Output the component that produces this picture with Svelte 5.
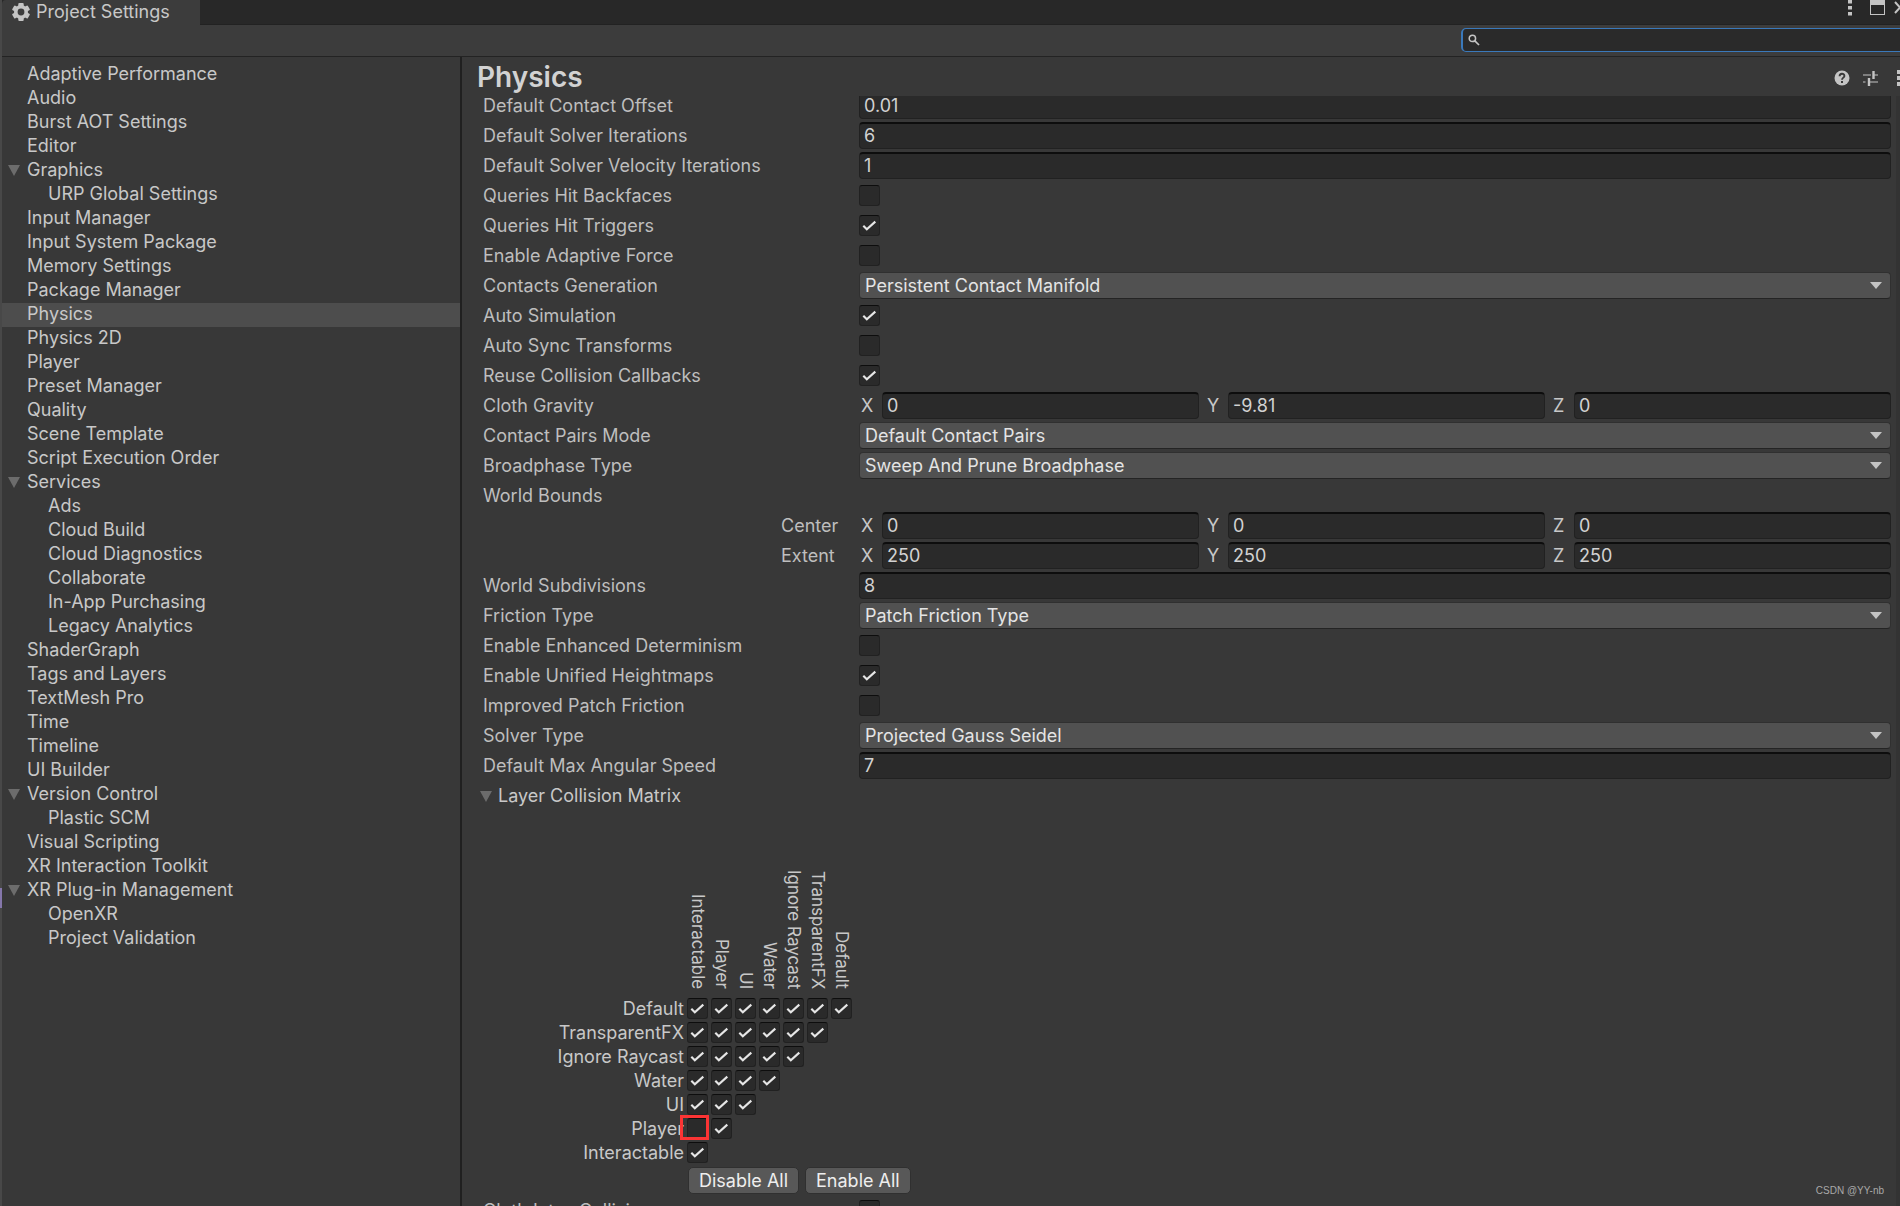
<script lang="ts">
  type NavItem = { name: string; level?: number; open?: boolean };
  type Row = {
    label: string;
    kind: 'text' | 'check' | 'select' | 'vector' | 'heading';
    value?: string;
    on?: boolean;
    values?: string[];
    nested?: boolean;
  };

  const nav: NavItem[] = [
    { name: 'Adaptive Performance' },
    { name: 'Audio' },
    { name: 'Burst AOT Settings' },
    { name: 'Editor' },
    { name: 'Graphics', open: true },
    { name: 'URP Global Settings', level: 1 },
    { name: 'Input Manager' },
    { name: 'Input System Package' },
    { name: 'Memory Settings' },
    { name: 'Package Manager' },
    { name: 'Physics' },
    { name: 'Physics 2D' },
    { name: 'Player' },
    { name: 'Preset Manager' },
    { name: 'Quality' },
    { name: 'Scene Template' },
    { name: 'Script Execution Order' },
    { name: 'Services', open: true },
    { name: 'Ads', level: 1 },
    { name: 'Cloud Build', level: 1 },
    { name: 'Cloud Diagnostics', level: 1 },
    { name: 'Collaborate', level: 1 },
    { name: 'In-App Purchasing', level: 1 },
    { name: 'Legacy Analytics', level: 1 },
    { name: 'ShaderGraph' },
    { name: 'Tags and Layers' },
    { name: 'TextMesh Pro' },
    { name: 'Time' },
    { name: 'Timeline' },
    { name: 'UI Builder' },
    { name: 'Version Control', open: true },
    { name: 'Plastic SCM', level: 1 },
    { name: 'Visual Scripting' },
    { name: 'XR Interaction Toolkit' },
    { name: 'XR Plug-in Management', open: true },
    { name: 'OpenXR', level: 1 },
    { name: 'Project Validation', level: 1 }
  ];

  let current = $state('Physics');

  let rows: Row[] = $state([
    { label: 'Default Contact Offset', kind: 'text', value: '0.01' },
    { label: 'Default Solver Iterations', kind: 'text', value: '6' },
    { label: 'Default Solver Velocity Iterations', kind: 'text', value: '1' },
    { label: 'Queries Hit Backfaces', kind: 'check', on: false },
    { label: 'Queries Hit Triggers', kind: 'check', on: true },
    { label: 'Enable Adaptive Force', kind: 'check', on: false },
    { label: 'Contacts Generation', kind: 'select', value: 'Persistent Contact Manifold' },
    { label: 'Auto Simulation', kind: 'check', on: true },
    { label: 'Auto Sync Transforms', kind: 'check', on: false },
    { label: 'Reuse Collision Callbacks', kind: 'check', on: true },
    { label: 'Cloth Gravity', kind: 'vector', values: ['0', '-9.81', '0'] },
    { label: 'Contact Pairs Mode', kind: 'select', value: 'Default Contact Pairs' },
    { label: 'Broadphase Type', kind: 'select', value: 'Sweep And Prune Broadphase' },
    { label: 'World Bounds', kind: 'heading' },
    { label: 'Center', kind: 'vector', values: ['0', '0', '0'], nested: true },
    { label: 'Extent', kind: 'vector', values: ['250', '250', '250'], nested: true },
    { label: 'World Subdivisions', kind: 'text', value: '8' },
    { label: 'Friction Type', kind: 'select', value: 'Patch Friction Type' },
    { label: 'Enable Enhanced Determinism', kind: 'check', on: false },
    { label: 'Enable Unified Heightmaps', kind: 'check', on: true },
    { label: 'Improved Patch Friction', kind: 'check', on: false },
    { label: 'Solver Type', kind: 'select', value: 'Projected Gauss Seidel' },
    { label: 'Default Max Angular Speed', kind: 'text', value: '7' }
  ]);

  const layers = ['Default', 'TransparentFX', 'Ignore Raycast', 'Water', 'UI', 'Player', 'Interactable'];
  const columns = [...layers].reverse();

  let matrix: boolean[][] = $state(
    layers.map((row, r) =>
      columns.slice(0, layers.length - r).map((col) => !(row === 'Player' && col === 'Interactable'))
    )
  );

  let cloth = $state(false);

  function setAll(value: boolean) {
    matrix = matrix.map((row) => row.map(() => value));
  }
</script>

{#snippet tick()}
  <svg class="tick" viewBox="0 0 21 21" aria-hidden="true">
    <path d="M4.3 10.8 L7.8 14.3 L16.3 6.6" />
  </svg>
{/snippet}

<div class="window">
  <header class="tabs">
    <div class="tab">
      <svg class="gear" viewBox="0 0 18 18" aria-hidden="true">
        <g fill="#c4c4c4">
          <rect x="6.3" y="0" width="5.4" height="18" rx="1" />
          <rect x="6.3" y="0" width="5.4" height="18" rx="1" transform="rotate(60 9 9)" />
          <rect x="6.3" y="0" width="5.4" height="18" rx="1" transform="rotate(120 9 9)" />
          <circle cx="9" cy="9" r="7" />
        </g>
        <circle cx="9" cy="9" r="3.4" fill="#3c3c3c" />
      </svg>
      <span>Project Settings</span>
    </div>
    <div class="window-tools">
      <button aria-label="Window menu">
        <svg width="4" height="16" viewBox="0 0 4 16"><path d="M0 0h4v3.5H0zM0 6h4v3.5H0zM0 12h4v3.5H0z" fill="#c4c4c4" /></svg>
      </button>
      <button aria-label="Maximize">
        <svg width="15" height="15" viewBox="0 0 15 15"><path d="M0 0h15v15H0zM1 5v9h13V5z" fill="#c4c4c4" fill-rule="evenodd" /></svg>
      </button>
      <button aria-label="Close">
        <svg width="12" height="14" viewBox="0 0 12 14"><path d="M1 2 L11 13 M11 2 L1 13" stroke="#c4c4c4" stroke-width="2" /></svg>
      </button>
    </div>
  </header>

  <div class="toolbar">
    <label class="search">
      <svg width="12" height="12" viewBox="0 0 12 12" aria-hidden="true">
        <circle cx="4.4" cy="4.4" r="3.2" fill="none" stroke="#c4c4c4" stroke-width="1.5" />
        <path d="M6.6 6.6 L11 11" stroke="#c4c4c4" stroke-width="1.7" />
      </svg>
      <input type="text" aria-label="Search settings" />
    </label>
  </div>

  <div class="body">
    <nav aria-label="Settings categories">
      {#each nav as item}
        <button
          class="item"
          class:child={item.level === 1}
          class:selected={item.name === current}
          onclick={() => (current = item.name)}
        >
          {#if item.open}
            <svg class="fold" viewBox="0 0 12 12" aria-hidden="true"><path d="M0 1h12L6 12z" /></svg>
          {/if}
          <span>{item.name}</span>
        </button>
      {/each}
    </nav>

    <main>
      <div class="title">
        <h1>Physics</h1>
        <div class="title-tools">
          <button aria-label="Help">
            <svg width="16" height="16" viewBox="0 0 16 16">
              <circle cx="8" cy="8" r="7.5" fill="#c4c4c4" />
              <path d="M5.6 6.2 C5.6 3 10.4 3 10.4 5.9 C10.4 7.6 8 7.7 8 9.8" fill="none" stroke="#383838" stroke-width="1.9" />
              <rect x="7" y="11" width="2" height="2" fill="#383838" />
            </svg>
          </button>
          <button aria-label="Presets">
            <svg width="15" height="15" viewBox="0 0 15 15">
              <path d="M0 4h8M11 4h4M0 11h2.5M6 11h9" stroke="#c4c4c4" stroke-width="1.2" />
              <path d="M10.5 0v8M6 7v8" stroke="#c4c4c4" stroke-width="2.4" />
            </svg>
          </button>
          <button aria-label="Component menu">
            <svg width="4" height="16" viewBox="0 0 4 16"><path d="M0 0h4v4H0zM0 6h4v4H0zM0 12h4v4H0z" fill="#c4c4c4" /></svg>
          </button>
        </div>
      </div>

      <div class="viewport">
        <div class="form">
          {#each rows as row, i}
            <div class="row">
              {#if row.kind === 'vector' || row.kind === 'heading'}
                <span class="name" class:nested={row.nested}>{row.label}</span>
              {:else}
                <label class="name" for={`field-${i}`}>{row.label}</label>
              {/if}

              {#if row.kind === 'text'}
                <input class="field" type="text" id={`field-${i}`} bind:value={row.value} />
              {:else if row.kind === 'check'}
                <span class="check">
                  <input type="checkbox" id={`field-${i}`} bind:checked={row.on} />
                  {@render tick()}
                </span>
              {:else if row.kind === 'select'}
                <span class="drop">
                  <select id={`field-${i}`}>
                    <option>{row.value}</option>
                  </select>
                  <svg class="arrow" viewBox="0 0 12 7" aria-hidden="true"><path d="M0 0h12L6 7z" /></svg>
                </span>
              {:else if row.kind === 'vector' && row.values}
                <div class="vector" role="group" aria-label={row.label}>
                  {#each ['X', 'Y', 'Z'] as axis, a}
                    <label>
                      <span>{axis}</span>
                      <input class="field" type="text" bind:value={row.values[a]} />
                    </label>
                  {/each}
                </div>
              {/if}
            </div>
          {/each}

          <button class="foldout">
            <svg class="fold" viewBox="0 0 12 12" aria-hidden="true"><path d="M0 1h12L6 12z" /></svg>
            <span>Layer Collision Matrix</span>
          </button>

          <table>
            <thead>
              <tr>
                <td></td>
                {#each columns as col}
                  <th scope="col"><span>{col}</span></th>
                {/each}
              </tr>
            </thead>
            <tbody>
              {#each layers as layer, r}
                <tr>
                  <th scope="row">{layer}</th>
                  {#each matrix[r] as _, c}
                    <td>
                      <span class="check">
                        <input
                          type="checkbox"
                          aria-label={`${layer} collides with ${columns[c]}`}
                          bind:checked={matrix[r][c]}
                        />
                        {@render tick()}
                        {#if layer === 'Player' && c === 0}
                          <span class="marker"></span>
                        {/if}
                      </span>
                    </td>
                  {/each}
                </tr>
              {/each}
            </tbody>
          </table>

          <div class="actions">
            <button onclick={() => setAll(false)}>Disable All</button>
            <button onclick={() => setAll(true)}>Enable All</button>
          </div>

          <div class="row">
            <label class="name" for="cloth">Cloth Inter-Collision</label>
            <span class="check">
              <input type="checkbox" id="cloth" bind:checked={cloth} />
              {@render tick()}
            </span>
          </div>
        </div>
        <div class="scrollbar"></div>
      </div>
    </main>
  </div>

  <div class="edge-mark"></div>
  <div class="credit">CSDN @YY-nb</div>
</div>

<style>
  :global(body) {
    background: #383838;
  }

  .window,
  .window * {
    box-sizing: border-box;
  }

  .window {
    position: relative;
    display: flex;
    flex-direction: column;
    height: 100vh;
    overflow: hidden;
    padding-left: 2px;
    background: linear-gradient(to right, #484848 2px, #383838 2px);
    color: #c8c8c8;
    font-family: Inter, 'Liberation Sans', sans-serif;
    font-size: 18px;
    line-height: 24px;
  }

  button,
  input,
  select {
    margin: 0;
    padding: 0;
    border: 0;
    outline: 0;
    background: none;
    color: inherit;
    font: inherit;
  }

  svg {
    display: block;
    flex: none;
  }

  .tabs {
    display: flex;
    justify-content: space-between;
    flex: none;
    height: 25px;
    background: #282828;
  }

  .tab {
    display: flex;
    align-items: center;
    gap: 6px;
    width: 198px;
    padding: 0 10px 2px;
    border-top-left-radius: 4px;
    background: #3c3c3c;
    white-space: nowrap;
  }

  .gear {
    width: 18px;
    height: 18px;
  }

  .window-tools {
    display: flex;
    align-items: flex-start;
    flex: 1;
    justify-content: flex-end;
    gap: 9px;
    margin-right: -6px;
    border-bottom: 1px solid #222;
  }

  .window-tools button:first-child {
    margin-right: 9px;
  }

  .toolbar {
    display: flex;
    justify-content: flex-end;
    align-items: flex-start;
    flex: none;
    height: 32px;
    padding-top: 3px;
    border-bottom: 1px solid #232323;
    background: #3c3c3c;
  }

  .search {
    display: flex;
    align-items: center;
    gap: 6px;
    width: 450px;
    height: 24px;
    margin-right: -11px;
    padding-left: 5px;
    border: 1px solid #3a79bb;
    border-left-width: 2px;
    border-radius: 5px;
    background: #2a2a2a;
  }

  .search input {
    flex: 1;
    min-width: 0;
  }

  .body {
    display: flex;
    flex: 1;
    min-height: 0;
  }

  nav {
    flex: none;
    width: 460px;
    padding-top: 6px;
    border-right: 2px solid #202020;
    overflow: hidden;
  }

  .item {
    display: flex;
    align-items: center;
    gap: 7px;
    width: 100%;
    height: 24px;
    padding: 0 0 2px 25px;
    text-align: left;
    white-space: nowrap;
  }

  .item.child {
    padding-left: 46px;
  }

  .item.selected {
    background: #4d4d4d;
  }

  .item:has(.fold) {
    padding-left: 6px;
  }

  .fold {
    width: 12px;
    height: 12px;
    fill: #6c6c6c;
  }

  main {
    display: flex;
    flex-direction: column;
    flex: 1;
    min-width: 0;
  }

  .title {
    display: flex;
    justify-content: space-between;
    align-items: center;
    flex: none;
    height: 39px;
    padding: 1px 0 0 15px;
  }

  h1 {
    margin: 0;
    color: #d2d2d2;
    font-size: 28px;
    font-weight: 600;
    line-height: 34px;
  }

  .title-tools {
    display: flex;
    align-items: center;
    gap: 13px;
    margin-right: -1px;
    padding-top: 2px;
  }

  .title-tools button:last-child {
    margin-left: 6px;
  }

  .viewport {
    display: flex;
    flex: 1;
    min-height: 0;
    overflow: hidden;
  }

  .form {
    display: flex;
    flex-direction: column;
    flex: 1;
    gap: 3px;
    min-width: 0;
    height: max-content;
    margin-top: -4px;
    padding: 0 5px 0 18px;
  }

  .scrollbar {
    flex: none;
    width: 4px;
    background: #333;
  }

  .row {
    display: grid;
    grid-template-columns: 376px minmax(0, 1fr);
    align-items: center;
    height: 27px;
    padding-left: 3px;
  }

  .name {
    color: #bebebe;
    line-height: 27px;
    white-space: nowrap;
  }

  .name.nested {
    padding-left: 298px;
  }

  .field {
    width: 100%;
    min-width: 0;
    height: 27px;
    padding: 0 4px 1px;
    border: 1px solid #212121;
    border-top: 2px solid #0d0d0d;
    border-radius: 4px;
    background: #2a2a2a;
    color: #d2d2d2;
  }

  .vector {
    display: grid;
    grid-template-columns: repeat(3, minmax(0, 1fr));
    gap: 6px;
  }

  .vector label {
    display: grid;
    grid-template-columns: 21px minmax(0, 1fr);
    align-items: center;
    padding-left: 2px;
  }

  .drop,
  .check {
    position: relative;
    display: grid;
    align-items: center;
  }

  .drop > *,
  .check > input,
  .check > svg {
    grid-area: 1 / 1;
  }

  .drop select {
    appearance: none;
    width: 100%;
    height: 27px;
    padding: 0 24px 0 5px;
    border: 1px solid #303030;
    border-bottom-color: #242424;
    border-radius: 4px;
    background: #515151;
    color: #e4e4e4;
  }

  .arrow {
    justify-self: end;
    width: 12px;
    height: 7px;
    margin-right: 9px;
    fill: #c4c4c4;
    pointer-events: none;
  }

  .check {
    width: 21px;
    height: 21px;
  }

  .check input {
    appearance: none;
    width: 21px;
    height: 21px;
    border: 1px solid #212121;
    border-top-color: #0d0d0d;
    border-radius: 3px;
    background: #2a2a2a;
  }

  .tick {
    width: 21px;
    height: 21px;
    fill: none;
    stroke: #e6e6e6;
    stroke-width: 2.1;
    pointer-events: none;
    visibility: hidden;
  }

  .check input:checked + .tick {
    visibility: visible;
  }

  .marker {
    position: absolute;
    top: -3px;
    left: -7px;
    width: 29px;
    height: 25px;
    border: 3px solid #fb3434;
    pointer-events: none;
  }

  .foldout {
    display: flex;
    align-items: center;
    gap: 6px;
    height: 27px;
    text-align: left;
  }

  table {
    align-self: flex-start;
    margin-left: 3px;
    border-collapse: collapse;
  }

  th,
  td {
    width: 24px;
    height: 24px;
    padding: 0;
    font-weight: 400;
    vertical-align: top;
  }

  thead th {
    height: 186px;
    padding: 0 3px 9px 0;
    font-size: 17px;
    vertical-align: bottom;
  }

  thead th span {
    display: block;
    width: 21px;
    line-height: 21px;
    text-align: left;
    white-space: nowrap;
    writing-mode: vertical-rl;
  }

  tbody th,
  thead td {
    width: 204px;
    padding-right: 3px;
    line-height: 21px;
    text-align: right;
    white-space: nowrap;
  }

  .actions {
    display: flex;
    gap: 6px;
    margin-top: -2px;
    padding-left: 208px;
  }

  .actions button {
    height: 27px;
    padding: 0 10px;
    border: 1px solid #303030;
    border-radius: 5px;
    background: #585858;
    color: #eee;
  }

  /* Sliver of the window behind, showing past the left edge */
  .edge-mark {
    position: absolute;
    top: 888px;
    left: 0;
    width: 2px;
    height: 20px;
    background: #8577ab;
  }

  .credit {
    position: absolute;
    right: 16px;
    bottom: 7px;
    color: #a9a9a9;
    font-family: 'Liberation Sans', sans-serif;
    font-size: 10px;
    line-height: 16px;
  }
</style>
